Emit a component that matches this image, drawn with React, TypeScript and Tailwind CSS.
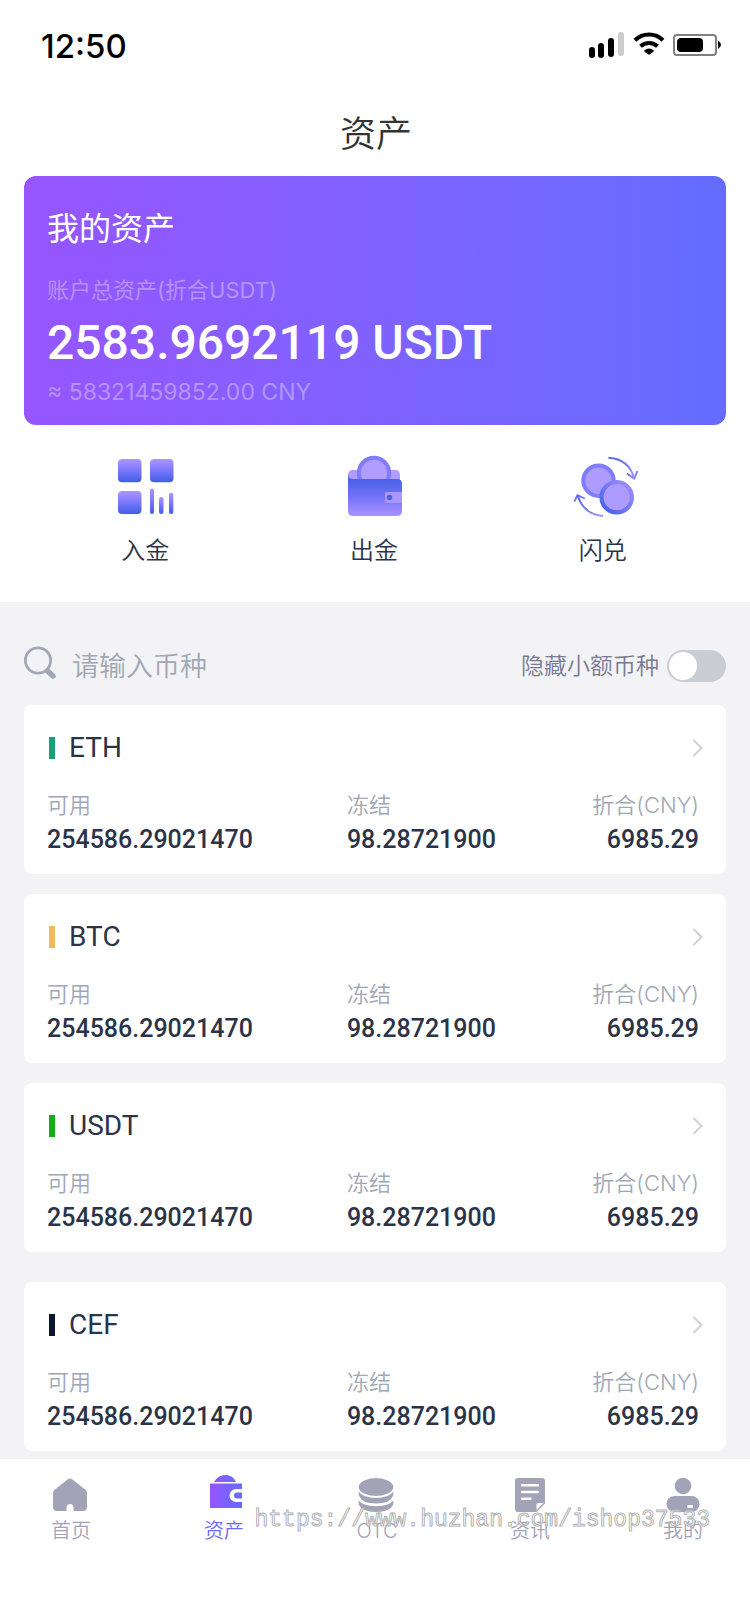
import { useState } from "react";
import type { ReactNode } from "react";

const coins = [
  { name: "ETH", bar: "bg-[#1aa179]", gap: "" },
  { name: "BTC", bar: "bg-[#f0b95a]", gap: "mt-5" },
  { name: "USDT", bar: "bg-[#14ad14]", gap: "mt-5" },
  { name: "CEF", bar: "bg-[#0b1730]", gap: "mt-[30px]" },
];

function StatusIcons() {
  return (
    <svg width="134" height="28" viewBox="0 0 134 28" aria-hidden="true">
      <rect x="1" y="15" width="6" height="11" rx="3" />
      <rect x="10" y="11" width="6" height="15" rx="3" />
      <rect x="20" y="6" width="6" height="19" rx="3" />
      <rect x="30" y="0" width="6" height="24" rx="3" fill="#ccc" />
      <path d="M47 8.2a20 20 0 0 1 28 0" fill="none" stroke="#000" strokeWidth="4" />
      <path d="M52.500 14.3a12.5 12.5 0 0 1 17 0" fill="none" stroke="#000" strokeWidth="4" />
      <path d="M56.500 18.2q4.500-3.400 9 0c.6.500.4 1-.2 1.500l-3.300 2.500q-1 .8-2 0l-3.300-2.500c-.6-.5-.8-1-.2-1.500z" />
      <rect x="86" y="3" width="42" height="20" rx="3" fill="none" stroke="#808080" strokeWidth="2" />
      <rect x="89" y="6" width="26" height="14" rx="4" />
      <path d="M130 8.500q3 2.400 3 4.200t-3 4.200z" />
    </svg>
  );
}

function DepositIcon() {
  return (
    <svg width="66" height="66" viewBox="-1 0 66 66" aria-hidden="true">
      <defs>
        <linearGradient id="dep" x1="0" y1="0" x2="0" y2="1">
          <stop offset="0" stopColor="#ac96ff" />
          <stop offset=".45" stopColor="#7f7afd" />
          <stop offset="1" stopColor="#405ee6" />
        </linearGradient>
      </defs>
      <g fill="url(#dep)">
        <rect x="5" y="6" width="23.500" height="23.300" rx="4" />
        <rect x="37" y="6" width="23.500" height="23.300" rx="4" />
        <rect x="5" y="38" width="23.500" height="23" rx="4" />
        <rect x="37" y="35.500" width="4" height="25.500" rx="2" />
        <rect x="46" y="44" width="4.500" height="17" rx="2.200" />
        <rect x="56" y="39.700" width="4.300" height="21.300" rx="2.100" />
      </g>
    </svg>
  );
}

function WithdrawIcon() {
  return (
    <svg width="66" height="66" viewBox="-1 0 66 66" aria-hidden="true">
      <defs>
        <linearGradient id="wdr" x1="0" y1="0" x2="0" y2="1">
          <stop offset="0" stopColor="#405ee6" />
          <stop offset=".55" stopColor="#7573f7" />
          <stop offset="1" stopColor="#aa92ff" />
        </linearGradient>
      </defs>
      <path d="M6 22q0-5 5-5h42q5 0 5 5v12H6z" fill="#b09dff" />
      <circle cx="32" cy="20" r="15.200" fill="#b09dff" stroke="#807cfd" strokeWidth="4" />
      <path d="M6 22q.6 4 5 4h44q5 0 5 5v27q0 5-5 5H11q-5 0-5-5z" fill="url(#wdr)" />
      <path d="M60 39H45q-2 0-2 2v7q0 2 2 2h15z" fill="#ab96fd" />
      <circle cx="47.500" cy="44.500" r="2.700" fill="#4860e4" />
    </svg>
  );
}

function SwapIcon() {
  return (
    <svg width="66" height="66" viewBox="-3 0 66 66" className="overflow-visible" aria-hidden="true">
      <defs>
        <linearGradient id="swA" x1="0" y1="0" x2="1" y2="1">
          <stop offset="0" stopColor="#4861ea" />
          <stop offset="1" stopColor="#a594fb" />
        </linearGradient>
        <linearGradient id="swB" x1="0" y1="1" x2="1" y2="0">
          <stop offset="0" stopColor="#405ee6" />
          <stop offset="1" stopColor="#a891ff" />
        </linearGradient>
      </defs>
      <circle cx="25.500" cy="27.700" r="15.200" fill="#ae9bff" stroke="#7f7cfe" strokeWidth="4" />
      <circle cx="43.700" cy="44.200" r="15.200" fill="#ae9bff" stroke="url(#swB)" strokeWidth="4.200" />
      <g fill="none" stroke="url(#swA)" strokeWidth="1.900">
        <path d="M35.500 4.700Q56 6 61.200 25.500" />
        <path d="M54 20.500l7.300 5.200 3-7.500" />
        <path d="M30 63Q11 61.500 4.800 43" />
        <path d="M1.300 48.700l3.200-6.500 7.300 3.500" />
      </g>
    </svg>
  );
}

const actions: { label: string; icon: ReactNode }[] = [
  { label: "入金", icon: <DepositIcon /> },
  { label: "出金", icon: <WithdrawIcon /> },
  { label: "闪兑", icon: <SwapIcon /> },
];

const tabs: { label: string; icon: ReactNode; active?: boolean }[] = [
  {
    label: "首页",
    icon: (
      <path
        d="M0 15q0-2 1.600-3.200L14.500 1.600q2.500-2 5 0l12.900 10.200Q34 13 34 15v14q0 4-4 4h-9.500v-3.500a3.500 3.500 0 0 0-7 0V33H4q-4 0-4-4z"
        fill="currentColor"
      />
    ),
  },
  {
    label: "资产",
    active: true,
    icon: (
      <>
        <defs>
          <linearGradient id="tabWallet" gradientUnits="userSpaceOnUse" x1="4" y1="0" x2="36" y2="0">
            <stop offset="0" stopColor="#9655ff" />
            <stop offset="1" stopColor="#646cff" />
          </linearGradient>
        </defs>
        <path
          d="M8 4q4-7 11.500-7T30 4zM4 5.500h32V11h-6a6.500 6.500 0 0 0 0 13h6v6H4zM36 14.500h-5a3 3 0 0 0 0 6h5z"
          fill="url(#tabWallet)"
        />
      </>
    ),
  },
  {
    label: "OTC",
    icon: (
      <g fill="currentColor">
        <ellipse cx="17" cy="9" rx="17.300" ry="9" />
        <path d="M-.3 13.500Q4 20 17 20t17.300-6.500v4Q31 25.500 17 25.500T-.3 17.500z" />
        <path d="M-.3 22.500Q4 28.200 17 28.200t17.300-5.700v4Q31 34 17 34T-.3 26.500z" />
      </g>
    ),
  },
  {
    label: "资讯",
    icon: (
      <>
        <path d="M6 0h24q3 0 3 3v22.500L24.500 34H6q-3 0-3-3V3q0-3 3-3z" fill="currentColor" />
        <path d="M31.500 25H26q-1.500 0-1.500 1.500v5.800z" fill="#fff" />
        <path d="M10 7.300h16M10 14h16M10 20.700h8.500" stroke="#fff" strokeWidth="2.400" strokeLinecap="round" />
      </>
    ),
  },
  {
    label: "我的",
    icon: (
      <>
        <circle cx="18" cy="8" r="8.300" fill="currentColor" />
        <rect x="1.500" y="18" width="33" height="16" rx="8" fill="currentColor" />
        <rect x="22" y="27" width="6" height="3" rx="1" fill="#fff" />
      </>
    ),
  },
];

function Tab({ label, icon, active }: { label: string; icon: ReactNode; active?: boolean }) {
  return (
    <a
      href="#"
      aria-current={active ? "page" : undefined}
      className={`flex w-20 flex-col items-center gap-[3px] text-xl leading-7 font-[350] ${active ? "text-[#6a6aff]" : "text-[#a2a3b7]"}`}
    >
      <svg width="36" height="36" viewBox="0 0 36 36" className="overflow-visible" aria-hidden="true">
        {icon}
      </svg>
      {label}
    </a>
  );
}

function CoinCard({ name, bar, gap }: { name: string; bar: string; gap: string }) {
  return (
    <article className={`rounded-lg bg-white pt-[27px] pr-[27px] pb-[15px] pl-[23px] ${gap}`}>
      <a href="#" className="flex h-8 items-center pl-0.5" aria-label={name}>
        <span className={`h-[22px] w-1.5 ${bar}`} />
        <h2 className="ml-3.5 flex-1 font-['Roboto',sans-serif] text-[28px] leading-8 text-[#2b3349]">{name}</h2>
        <svg width="20" height="20" viewBox="0 0 20 20" className="-mr-[9px]" aria-hidden="true">
          <path d="M5.500 2l8 8-8 8" fill="none" stroke="#cfd1d9" strokeWidth="2" />
        </svg>
      </a>
      <dl className="mt-[25px] grid grid-cols-[46fr_30fr_24fr] text-[22px] leading-8 font-[350] text-[#a1a7b5]">
        <div>
          <dt>可用</dt>
          <dd className="font-['Roboto',sans-serif] text-[25px] leading-[38px] font-medium text-[#2b3349]">254586.29021470</dd>
        </div>
        <div>
          <dt>冻结</dt>
          <dd className="font-['Roboto',sans-serif] text-[25px] leading-[38px] font-medium text-[#2b3349]">98.28721900</dd>
        </div>
        <div className="text-right whitespace-nowrap">
          <dt>折合(CNY)</dt>
          <dd className="font-['Roboto',sans-serif] text-[25px] leading-[38px] font-medium text-[#2b3349]">6985.29</dd>
        </div>
      </dl>
    </article>
  );
}

export default function App() {
  const [hideSmall, setHideSmall] = useState(false);
  return (
    <div className="flex min-h-screen flex-col bg-white font-['Inter','Noto_Sans_CJK_SC',sans-serif]">
      <header>
        <div className="flex h-[92px] items-center justify-between pr-7 pl-[41px] text-black">
          <time className="text-[33px] leading-10 font-medium">12:50</time>
          <StatusIcons />
        </div>
        <h1 className="pl-0.5 text-center text-4xl leading-[84px] font-[350] text-[#333]">资产</h1>
      </header>

      <section className="mx-6 rounded-xl bg-linear-to-r from-[#9655ff] to-[#646cff] px-[23px] pt-[29px] pb-[17px] text-white">
        <h2 className="text-[32px] leading-[48px]">我的资产</h2>
        <p className="mt-[21px] text-[22px] leading-8 text-white/35">账户总资产(折合USDT)</p>
        <p className="mt-[9px] font-['Roboto',sans-serif] text-5xl leading-[56px] font-medium">2583.9692119 USDT</p>
        <p className="mt-[5px] text-[23px] leading-8 text-white/35">≈ 58321459852.00 CNY</p>
      </section>

      <div className="grid grid-cols-3 pt-7 pr-[33px] pb-[35px] pl-[31px]">
        {actions.map((a) => (
          <button key={a.label} type="button" className="flex flex-col items-center gap-4 text-2xl leading-8 font-[350] text-[#2b3349]">
            {a.icon}
            {a.label}
          </button>
        ))}
      </div>

      <main className="flex-1 bg-[#f3f3f6] px-6 pt-[42px] pb-[7px]">
        <div className="mb-[17px] flex h-11 items-center">
          <svg width="34" height="40" viewBox="0 0 34 40" aria-hidden="true">
            <circle cx="14" cy="14.500" r="12.600" fill="none" stroke="#a1a7b5" strokeWidth="2.800" />
            <path d="M23.500 25l5.500 5" stroke="#a1a7b5" strokeWidth="5.500" strokeLinecap="round" />
          </svg>
          <input
            type="text"
            aria-label="请输入币种"
            placeholder="请输入币种"
            className="ml-3.5 h-11 min-w-0 flex-1 bg-transparent text-[27px] font-[350] text-[#2b3349] outline-none placeholder:text-[#a1a7b5]"
          />
          <label htmlFor="hide-small" className="mr-2 text-[23px] leading-8 font-[350] text-[#777a91]">
            隐藏小额币种
          </label>
          <input
            id="hide-small"
            type="checkbox"
            role="switch"
            checked={hideSmall}
            onChange={(e) => setHideSmall(e.target.checked)}
            className="flex h-8 w-[59px] appearance-none items-center rounded-full bg-[#cacdd4] px-0.5 before:size-7 before:rounded-full before:bg-white checked:justify-end checked:bg-[#6a6aff]"
          />
        </div>
        {coins.map((c) => (
          <CoinCard key={c.name} {...c} />
        ))}
      </main>

      <nav className="relative flex justify-between border-t border-[#ececf0] bg-white pt-[19px] pr-[27px] pb-[79px] pl-[31px]">
        {tabs.map((t) => (
          <Tab key={t.label} {...t} />
        ))}
        <span className="pointer-events-none absolute top-[47px] right-10 font-['Liberation_Mono',monospace] text-[23px] leading-7 text-white/60 [-webkit-text-stroke:1px_#b4b4b4]">
          https://www.huzhan.com/ishop37533
        </span>
      </nav>
    </div>
  );
}
